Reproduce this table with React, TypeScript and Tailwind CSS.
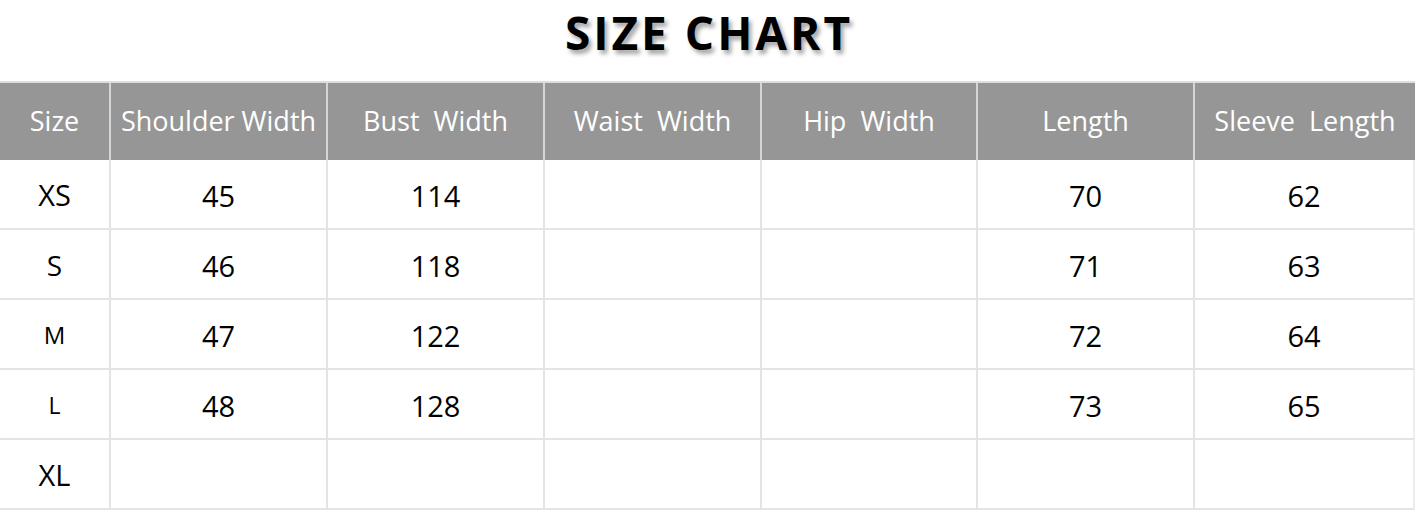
const columns = [
  "Size",
  "Shoulder Width",
  "Bust  Width",
  "Waist  Width",
  "Hip  Width",
  "Length",
  "Sleeve  Length",
];

const rows = [
  { size: "XS", sizeClass: "text-[29px]", values: ["45", "114", "", "", "70", "62"] },
  { size: "S", sizeClass: "text-[28px]", values: ["46", "118", "", "", "71", "63"] },
  { size: "M", sizeClass: "text-[24px]", values: ["47", "122", "", "", "72", "64"] },
  { size: "L", sizeClass: "text-[23px]", values: ["48", "128", "", "", "73", "65"] },
  { size: "XL", sizeClass: "text-[29px]", values: ["", "", "", "", "", ""] },
];

const grid = "grid w-[1415px] grid-cols-[111px_217px_217px_217px_216px_217px_220px]";

export default function App() {
  return (
    <div className="h-[514px] w-[1418px] overflow-hidden bg-white font-['Open_Sans',sans-serif]">
      {/* Title */}
      <div className="flex h-[81px] justify-center pt-[9px]">
        <h1 className="text-[46px] font-bold leading-none tracking-[3px] text-black [text-shadow:3px_4px_4px_rgba(0,0,0,0.35)]">
          SIZE CHART
        </h1>
      </div>

      {/* Header */}
      <div className={`${grid} h-[79px] border-t-2 border-[#dedede] bg-[#969696]`}>
        {columns.map((col, i) => (
          <div
            key={col}
            className={
              "flex items-center justify-center whitespace-pre text-[27px] text-white " +
              (i < columns.length - 1 ? "border-r-2 border-[#d6d6d6]" : "")
            }
          >
            {col}
          </div>
        ))}
      </div>

      {/* Body */}
      {rows.map((row) => (
        <div key={row.size} className={`${grid} h-[70px]`}>
          <div className={`flex items-center justify-center border-r-2 border-b-2 border-[#e4e4e4] pt-[2px] text-black ${row.sizeClass}`}>
            {row.size}
          </div>
          {row.values.map((v, i) => (
            <div
              key={i}
              className={
                "flex items-center justify-center border-b-2 border-[#e4e4e4] pt-[3px] text-[29px] text-black " +
                (i < row.values.length - 1 ? "border-r-2" : "border-r-2 border-r-[#eeeeee]")
              }
            >
              {v}
            </div>
          ))}
        </div>
      ))}
    </div>
  );
}
